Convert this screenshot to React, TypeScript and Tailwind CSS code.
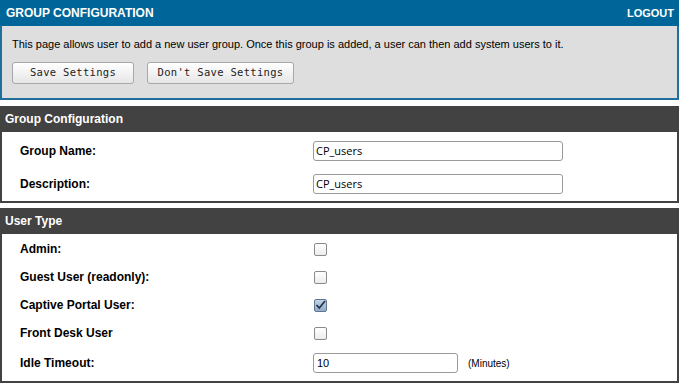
import React from 'react';

function Checkbox({ checked }: { checked?: boolean }) {
  if (checked) {
    return (
      <span className="w-[13px] h-[13px] rounded-[2px] border border-[#5f7793] bg-gradient-to-b from-[#c4d3e4] to-[#93abc8] flex items-center justify-center">
        <svg width="11" height="10" viewBox="0 0 11 10">
          <path d="M1.5 5 L4.3 8 L10 1" fill="none" stroke="#22334a" strokeWidth="1.8" />
        </svg>
      </span>
    );
  }
  return (
    <span className="w-[13px] h-[13px] rounded-[2px] border border-[#8a8a8a] bg-gradient-to-b from-white to-[#ececec]" />
  );
}

function SectionHeader({ title }: { title: string }) {
  return (
    <div className="h-[26px] bg-[#424242] flex items-center px-[5px] text-white font-bold text-[12px]">
      {title}
    </div>
  );
}

function TextRow({ label, value, h }: { label: string; value: string; h: string }) {
  return (
    <div className={`flex items-center ${h}`}>
      <span className="w-[311px] pl-[18px] font-bold text-[12px] text-black">{label}</span>
      <div className="w-[250px] h-[20px] border border-[#9a9a9a] rounded-[3px] bg-white flex items-center px-[2px] font-['Open_Sans'] text-[11px] text-black">
        {value}
      </div>
    </div>
  );
}

function CheckRow({ label, checked }: { label: string; checked?: boolean }) {
  return (
    <div className="flex items-center h-[28px]">
      <span className="w-[312px] pl-[18px] font-bold text-[12px] text-black">{label}</span>
      <Checkbox checked={checked} />
    </div>
  );
}

export default function App() {
  return (
    <div className="w-[679px] bg-white font-['Liberation_Sans',Arial,sans-serif]">
      {/* Top panel */}
      <div>
        <div className="h-[26px] bg-[#006699] flex items-center justify-between pl-[6px] pr-[5px] text-white font-bold">
          <span className="text-[12px]">GROUP CONFIGURATION</span>
          <span className="text-[11px]">LOGOUT</span>
        </div>
        <div className="bg-[#dedede] border-x-2 border-b-2 border-[#1f6f9f] pl-[10px] pt-[12px] pb-[14px]">
          <p className="text-[11px] leading-[13px] text-black">
            This page allows user to add a new user group. Once this group is added, a user can then add system users to it.
          </p>
          <div className="flex gap-[13px] mt-[11px]">
            <button className="w-[122px] h-[22px] rounded-[3px] border border-[#a8a8a8] bg-gradient-to-b from-white to-[#e6e6e6] font-['DejaVu_Sans_Mono',monospace] text-[10.5px] text-[#222] tracking-[0.3px]">
              Save Settings
            </button>
            <button className="w-[147px] h-[22px] rounded-[3px] border border-[#a8a8a8] bg-gradient-to-b from-white to-[#e6e6e6] font-['DejaVu_Sans_Mono',monospace] text-[10.5px] text-[#222] tracking-[0.3px]">
              Don't Save Settings
            </button>
          </div>
        </div>
      </div>

      {/* Group Configuration */}
      <div className="mt-[6px]">
        <SectionHeader title="Group Configuration" />
        <div className="border-x-2 border-b-2 border-[#424242] pt-[8px] pb-[6px]">
          <TextRow label="Group Name:" value="CP_users" h="h-[22px]" />
          <div className="h-[11px]" />
          <TextRow label="Description:" value="CP_users" h="h-[22px]" />
        </div>
      </div>

      {/* User Type */}
      <div className="mt-[5px]">
        <SectionHeader title="User Type" />
        <div className="border-x-2 border-b-2 border-[#424242] pt-[1px] pb-[2px]">
          <CheckRow label="Admin:" />
          <CheckRow label="Guest User (readonly):" />
          <CheckRow label="Captive Portal User:" checked />
          <CheckRow label="Front Desk User" />
          <div className="flex items-center h-[32px]">
            <span className="w-[311px] pl-[18px] font-bold text-[12px] text-black">Idle Timeout:</span>
            <div className="w-[145px] h-[20px] border border-[#9a9a9a] rounded-[3px] bg-white flex items-center px-[3px] text-[11px] text-black">
              10
            </div>
            <span className="ml-[10px] text-[10px] text-black">(Minutes)</span>
          </div>
        </div>
      </div>
    </div>
  );
}
